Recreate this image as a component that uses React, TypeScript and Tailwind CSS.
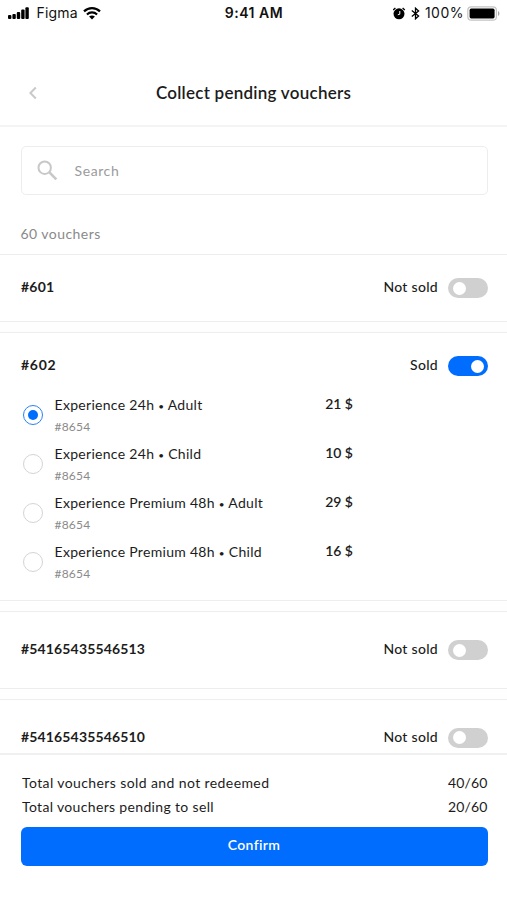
type Option = { product: string; audience: string; code: string; price: string };

const options: Option[] = [
  { product: 'Experience 24h', audience: 'Adult', code: '#8654', price: '21 $' },
  { product: 'Experience 24h', audience: 'Child', code: '#8654', price: '10 $' },
  { product: 'Experience Premium 48h', audience: 'Adult', code: '#8654', price: '29 $' },
  { product: 'Experience Premium 48h', audience: 'Child', code: '#8654', price: '16 $' },
];

function StatusBar() {
  return (
    <div className="grid h-[26px] grid-cols-[1fr_auto_1fr] items-center pl-2 pr-[7px] font-[Inter,sans-serif] text-[14px] leading-[26px] text-[#111]">
      <div className="flex items-center">
        <svg width="21" height="13" viewBox="0 0 21 13" fill="#000">
          <rect x="0" y="8" width="3.4" height="4" rx="1" />
          <rect x="4.4" y="7" width="3.4" height="5" rx="1" />
          <rect x="8.8" y="5" width="3.4" height="7" rx="1" />
          <rect x="13.2" y="2.6" width="3.4" height="9.4" rx="1" />
          <rect x="17.4" y="0.2" width="3.4" height="11.8" rx="1" />
        </svg>
        <span className="ml-[7.5px] tracking-[0.2px]">Figma</span>
        <svg className="ml-[5px]" width="18" height="13" viewBox="0 0 18 13" fill="none" stroke="#000">
          <path d="M1 4.4C5.5 0.1 12.5 0.1 17 4.4" strokeWidth="2.2" />
          <path d="M3.9 7.4C6.8 4.7 11.2 4.7 14.1 7.4" strokeWidth="2.1" />
          <path d="M9 12.4L6.1 9.5C7.8 8 10.2 8 11.9 9.5Z" fill="#000" stroke="none" />
        </svg>
      </div>
      <span className="font-semibold tracking-[0.5px]">9:41 AM</span>
      <div className="flex items-center justify-end">
        <svg width="14" height="13" viewBox="0 0 14 13" fill="none" stroke="#000">
          <circle cx="6" cy="6.8" r="5.5" fill="#000" stroke="none" />
          <path d="M0.2 3L2.4 1M11.8 3L9.6 1" strokeWidth="1.3" />
          <path d="M6.8 4V7.2L4.8 7.8" stroke="#fff" strokeWidth="1" />
        </svg>
        <svg className="ml-1" width="9" height="13" viewBox="0 0 9 13" fill="none" stroke="#000" strokeWidth="1.3">
          <path d="M0.8 3.6L7.6 9L4.5 11.8V1.2L7.6 4L0.8 9.4" />
        </svg>
        <span className="ml-[5px] tracking-[0.5px]">100%</span>
        <svg className="ml-[3px]" width="33" height="15" viewBox="0 0 33 15">
          <rect x="0.8" y="0.8" width="28.6" height="13.4" rx="3.5" fill="#fff" stroke="#c4c4c4" strokeWidth="1.2" />
          <rect x="2.6" y="2.6" width="25" height="9.8" rx="1.6" fill="#000" />
          <path d="M31 5C32.9 5.8 32.9 9.2 31 10Z" fill="#aaa" />
        </svg>
      </div>
    </div>
  );
}

function Toggle({ on }: { on: boolean }) {
  return (
    <span
      className={
        on
          ? 'flex h-5 w-[39.5px] items-center justify-end rounded-full bg-[#006dff] px-1'
          : 'flex h-5 w-[39.5px] items-center justify-start rounded-full bg-[#d0d0d0] px-[5px]'
      }
    >
      <span className="size-[13px] rounded-full bg-white" />
    </span>
  );
}

function VoucherHead({ id, sold, idClass }: { id: string; sold: boolean; idClass: string }) {
  return (
    <div className="flex h-5 items-center justify-between">
      <span className={idClass}>{id}</span>
      <div className="flex items-center gap-[10px]">
        <span className="pb-[3px] text-[14px] font-medium leading-[17px] tracking-[0.3px]">
          {sold ? 'Sold' : 'Not sold'}
        </span>
        <Toggle on={sold} />
      </div>
    </div>
  );
}

function Radio({ checked }: { checked: boolean }) {
  return checked ? (
    <span className="flex size-5 items-center justify-center rounded-full border-[1.5px] border-[#2b80f8]">
      <span className="size-[10px] rounded-full bg-[#006dff]" />
    </span>
  ) : (
    <span className="block size-5 rounded-full border-[1.5px] border-[#d4d4d4]" />
  );
}

const firstId = 'pb-[3px] text-[14px] leading-[17px] font-bold tracking-[0.2px]';
const shortId = 'pb-[3px] text-[14px] leading-[17px] font-bold tracking-[0.7px]';
const longId = 'pb-[3px] text-[14px] leading-[17px] font-bold tracking-[0.15px]';

export default function App() {
  return (
    <div className="flex h-[900px] w-[507px] flex-col overflow-hidden bg-white font-[Lato,sans-serif] text-[14px] text-[#1c1c1c]">
      <StatusBar />
      <header className="grid h-[101px] shrink-0 grid-cols-[1fr_auto_1fr] items-center border-b-2 border-[#f4f4f4] px-[28px] pt-[34px]">
        <svg width="10" height="14" viewBox="0 0 10 14" fill="none" stroke="#c9c9c9" strokeWidth="2">
          <path d="M7.8 1.5L2.4 7L7.8 12.5" />
        </svg>
        <h1 className="text-[17px] font-semibold leading-6 tracking-[0.25px]">Collect pending vouchers</h1>
      </header>
      <div className="px-[20.5px] pt-[19px]">
        <div className="flex h-[49px] w-[467px] items-center rounded-[5px] border-[1.5px] border-[#ededed] pl-[15px]">
          <svg width="21" height="21" viewBox="0 0 21 21" fill="none" stroke="#c8c8c8">
            <circle cx="7.7" cy="7.7" r="6.2" strokeWidth="2" />
            <path d="M12.2 12.2L19.3 19.3" strokeWidth="2.6" />
          </svg>
          <span className="ml-[17px] text-[14px] tracking-[0.6px] text-[#9b9b9b]">Search</span>
        </div>
      </div>
      <p className="h-[59px] shrink-0 pl-[20.5px] pt-[29px] text-[14px] leading-5 tracking-[0.45px] text-[#8a8a8a]">
        60 vouchers
      </p>

      <main className="flex h-[499px] shrink-0 flex-col gap-[10px] overflow-hidden bg-[#fefefe]">
        <section className="h-[68px] shrink-0 border-y border-[#ededed] bg-white pl-[21px] pr-[19.5px] pt-[23px]">
          <VoucherHead id="#601" sold={false} idClass={firstId} />
        </section>
        <section className="h-[269px] shrink-0 border-y border-[#ededed] bg-white pl-[21px] pr-[19.5px] pt-[23px]">
          <VoucherHead id="#602" sold idClass={shortId} />
          <ul className="mt-[19px] flex flex-col">
            {options.map((o, i) => (
              <li key={o.product + o.audience} className="flex h-[49px] w-[332px] pl-[1.5px]">
                <span className="mt-[10px] shrink-0">
                  <Radio checked={i === 0} />
                </span>
                <div className="ml-3 flex-1">
                  <p className="text-[14px] leading-5 tracking-[0.3px]">
                    {o.product} <span className="text-[10px]">•</span> {o.audience}
                  </p>
                  <p className="mt-px text-[12px] leading-5 tracking-[0.2px] text-[#8a8a8a]">{o.code}</p>
                </div>
                <span className="-mt-px text-[14px] font-semibold leading-5">{o.price}</span>
              </li>
            ))}
          </ul>
        </section>
        <section className="h-[78px] shrink-0 border-y border-[#ededed] bg-white pl-[21px] pr-[19.5px] pt-[28px]">
          <VoucherHead id="#54165435546513" sold={false} idClass={longId} />
        </section>
        <section className="h-[78px] shrink-0 border-t border-[#ededed] bg-white pl-[21px] pr-[19.5px] pt-[27.5px]">
          <VoucherHead id="#54165435546510" sold={false} idClass={longId} />
        </section>
      </main>

      <footer className="flex-1 border-t-2 border-[#f0f0f0] pl-[20.5px] pr-[19.5px] pt-4">
        <dl className="text-[14px] leading-[24px]">
          <div className="flex justify-between pl-[1.5px]">
            <dt className="tracking-[0.4px]">Total vouchers sold and not redeemed</dt>
            <dd className="tracking-[0.15px]">40/60</dd>
          </div>
          <div className="flex justify-between pl-[1.5px]">
            <dt className="tracking-[0.34px]">Total vouchers pending to sell</dt>
            <dd className="tracking-[0.15px]">20/60</dd>
          </div>
        </dl>
        <button className="mt-2 flex h-[39px] w-full items-center justify-center rounded-[6px] bg-[#006dff] pb-1 text-[14px] font-semibold tracking-[0.35px] text-white">
          Confirm
        </button>
      </footer>
    </div>
  );
}
